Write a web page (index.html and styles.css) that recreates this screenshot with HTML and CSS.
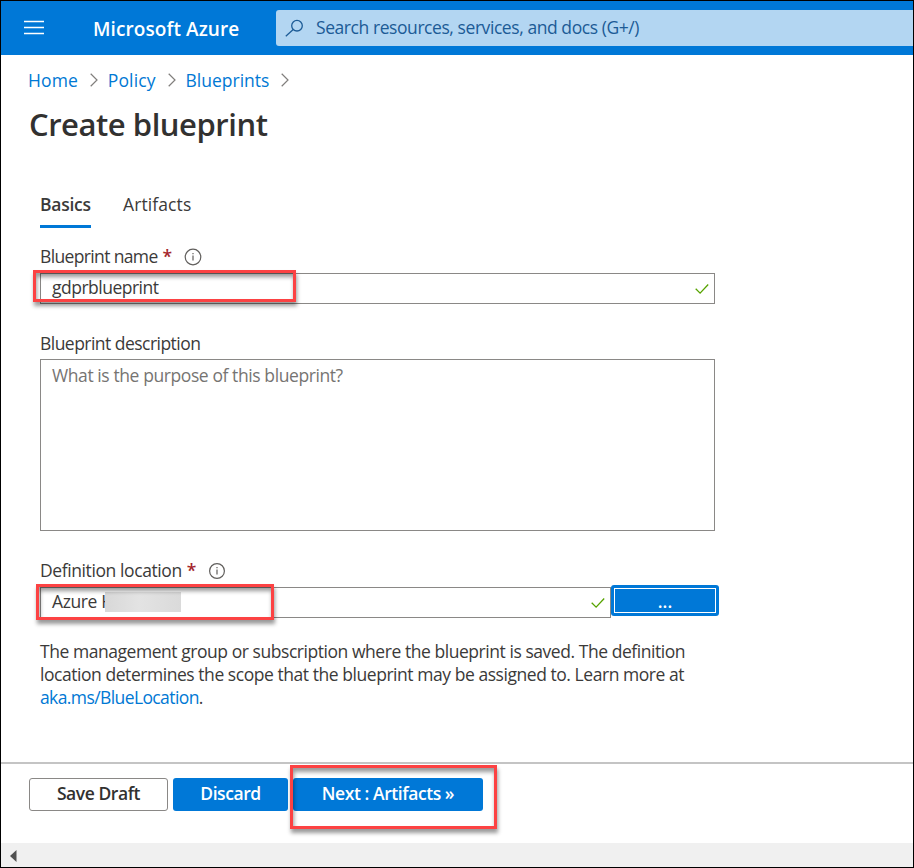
FILE: index.html
```html
<!DOCTYPE html>
<html lang="en">
<head>
<meta charset="utf-8">
<title>Create blueprint - Microsoft Azure</title>
<link rel="stylesheet" href="styles.css">
</head>
<body>
<header class="topbar">
  <svg class="menu" width="20" height="16" viewBox="0 0 20 16"><path d="M0 1.5h20M0 7.5h20M0 13.5h20" stroke="#fff" stroke-width="1.3"/></svg>
  <span class="brand">Microsoft Azure</span>
  <div class="search">
    <svg width="20" height="18" viewBox="0 0 20 18" fill="none" stroke="#1c5b96" stroke-width="1.3"><circle cx="12" cy="6.7" r="5.3"/><path d="M8.2 10.5L.8 17.2"/></svg>
    <span class="search-text">Search resources, services, and docs (G+/)</span>
  </div>
</header>
<nav class="crumbs">
  <a>Home</a><svg width="8" height="14" viewBox="0 0 8 14"><path d="M.7.8L7 7 .7 13.2"/></svg>
  <a>Policy</a><svg width="8" height="14" viewBox="0 0 8 14"><path d="M.7.8L7 7 .7 13.2"/></svg>
  <a class="c-blue">Blueprints</a><svg width="8" height="14" viewBox="0 0 8 14"><path d="M.7.8L7 7 .7 13.2"/></svg>
</nav>
<h1><span>Create blueprint</span></h1>
<main>
  <div class="tabs"><span class="tab active">Basics</span><span class="tab t-art">Artifacts</span></div>
  <div class="label l-name"><span>Blueprint name</span><b>*</b>
    <svg width="18" height="18" viewBox="0 0 18 18"><circle cx="9" cy="9" r="7.8"/><path d="M9 7.5v5M9 5v1.2"/></svg></div>
  <div class="field">
    <span class="v-name">gdprblueprint</span>
    <svg class="check" width="14" height="12" viewBox="0 0 14 12"><path d="M.7 5.7l4.4 4.4L13.2 1.5"/></svg>
    <i class="mark m-name"></i>
  </div>
  <div class="label l-desc"><span>Blueprint description</span></div>
  <div class="area"><span>What is the purpose of this blueprint?</span></div>
  <div class="label l-loc"><span>Definition location</span><b>*</b>
    <svg width="18" height="18" viewBox="0 0 18 18"><circle cx="9" cy="9" r="7.4"/><path d="M9 7.5v5M9 5v1.2"/></svg></div>
  <div class="row">
    <div class="field loc">
      <span class="v-loc">Azure H</span><i class="redacted"></i>
      <svg class="check" width="14" height="12" viewBox="0 0 14 12"><path d="M.7 5.7l4.4 4.4L13.2 1.5"/></svg>
      <i class="mark m-loc"></i>
    </div>
    <div class="browse"><span>...</span></div>
  </div>
  <p class="help"><span>The management group or subscription where the blueprint is saved. The definition</span><br><span>location determines the scope that the blueprint may be assigned to. Learn more at</span><br><span class="link-line"><a>aka.ms/BlueLocation</a>.</span></p>
</main>
<footer>
  <div class="btn save"><span>Save Draft</span></div>
  <div class="btn discard"><span>Discard</span></div>
  <div class="btn next"><span>Next : Artifacts »</span><i class="mark m-next"></i></div>
</footer>
<div class="scroll"><svg width="7" height="12" viewBox="0 0 7 12"><path d="M6.5 0v12L0 6z" fill="#505050"/></svg></div>
</body>
</html>
```
FILE: styles.css
```css
* { box-sizing: border-box; }
body {
  margin: 0; width: 914px; height: 868px; border: 1px solid #000;
  display: flex; flex-direction: column; overflow: hidden; background: #fff;
  font: 17.5px/24px "Open Sans", "Noto Sans", sans-serif; color: #3b3a39;
}
span, a { white-space: nowrap; }
svg { flex: none; }
a { color: #0078d4; }
.topbar { height: 54px; flex: none; background: #0078d7; display: flex; align-items: center; padding-left: 23px; }
.brand { margin-left: 49px; width: 183px; padding-top: 2px; color: #fff; font-size: 19px; font-weight: 600; letter-spacing: .08px; }
.search { flex: 1; height: 36px; background: #b3d6f2; border-radius: 3px 0 0 3px; display: flex; align-items: center; padding-left: 9px; color: #1c5b96; }
.search-text { margin-left: 11px; padding-bottom: 2px; letter-spacing: -.43px; }
.crumbs { height: 24px; flex: none; margin: 13px 0 0 27px; display: flex; align-items: center; letter-spacing: .1px; }
.crumbs .c-blue { letter-spacing: 0; }
.crumbs svg { margin: 0 10px 0 12px; fill: none; stroke: #807e7c; stroke-width: 1.2; }
h1 { margin: 12px 0 0 28px; height: 40px; flex: none; font-size: 31px; line-height: 40px; font-weight: 600; letter-spacing: -.46px; color: #323130; }
main { flex: none; width: 680px; height: 618px; margin-left: 39px; }
.tabs { margin-top: 48px; display: flex; gap: 32px; }
.tab { height: 36px; line-height: 25px; }
.active { font-weight: 600; border-bottom: 3px solid #0078d7; width: 51px; letter-spacing: -.25px; }
.t-art { letter-spacing: .1px; }
.label { display: flex; align-items: center; height: 24px; }
.label span, .label b { padding-bottom: 2px; }
.label b { color: #a4262c; margin-left: 5px; width: 9px; font-weight: 600; letter-spacing: 0; }
.label svg { margin-left: 12px; fill: none; stroke: #605e5c; stroke-width: 1.2; }
.l-name { margin-top: 17px; letter-spacing: -.64px; }
.field { position: relative; width: 675px; height: 31px; margin-top: 4px; border: 1px solid #8a8886; display: flex; align-items: center; padding: 0 5px 2px 11px; }
.field span { padding-bottom: 2px; }
.v-name { letter-spacing: -.5px; }
.check { margin-left: auto; fill: none; stroke: #57a300; stroke-width: 1.3; position: relative; top: 1px; }
.mark { position: absolute; border: 3px solid #fc4243; box-shadow: 1px 4px 4px rgba(0,0,0,.4), inset 1px 4px 4px rgba(0,0,0,.4); }
.m-name { left: -8px; top: -4px; width: 263px; height: 32px; }
.l-desc { margin-top: 28px; letter-spacing: -.53px; }
.area { width: 675px; height: 172px; margin-top: 3px; border: 1px solid #8a8886; padding: 3px 11px; color: #767472; letter-spacing: -.41px; }
.l-loc { margin-top: 28px; letter-spacing: -.4px; }
.row { display: flex; margin-top: 4px; }
.field.loc { width: 571px; margin: 0; }
.v-loc { width: 53px; letter-spacing: -.4px; }
.redacted { width: 76px; height: 20px; background: linear-gradient(90deg,#d8d8d8,#e3e3e3 45%,#dadada); position: relative; }
.m-loc { left: -5px; top: -4px; width: 238px; height: 36px; }
.browse { width: 108px; height: 31px; margin-top: -2px; background: #0078d7; border-radius: 3px; padding: 3px; color: #fff; font-weight: 600; text-align: center; }
.browse span { display: block; height: 25px; border: 1px solid #fff; line-height: 25px; }
.help { margin: 22px 0 0; line-height: 23px; letter-spacing: -.45px; }
.link-line { letter-spacing: -.6px; }
footer { flex: none; height: 81px; border-top: 2px solid #c4c4c4; padding: 14px 0 0 28px; display: flex; }
.btn { position: relative; height: 33px; line-height: 31px; text-align: center; border-radius: 3px; background: #0078d7; color: #fff; font-weight: 600; letter-spacing: -.43px; }
.save { width: 139px; background: #fff; color: #323130; border: 1px solid #8a8886; line-height: 29px; }
.discard { width: 115px; margin-left: 5px; }
.next { width: 190px; margin-left: 5px; }
.m-next { left: -3px; top: -13px; width: 207px; height: 64px; }
.scroll { height: 25px; flex: none; background: #f0f0f0; display: flex; align-items: center; padding-left: 9px; }
```
